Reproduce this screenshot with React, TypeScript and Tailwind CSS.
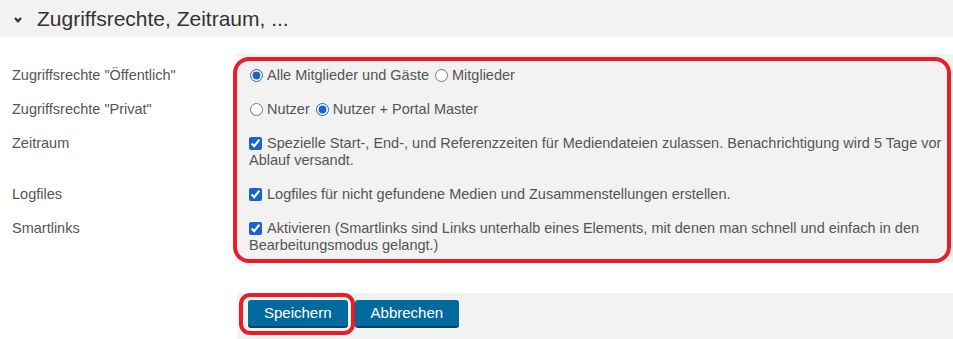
import React from 'react';

const font = "font-['Liberation_Sans',Arial,sans-serif]";

function Row({ label, children }: { label: string; children: React.ReactNode }) {
  return (
    <div className="flex">
      <div className="w-[237px] shrink-0 pl-3 py-[8.5px] leading-[17px]">{label}</div>
      <div className="flex-1 bg-[#f2f2f2] pl-3 pr-[6px] py-[8.5px] leading-[17px]">{children}</div>
    </div>
  );
}

const radio = 'm-0 h-[13px] w-[13px] align-[-2px] accent-[#1a62cc]';
const check = 'm-0 mr-[5px] h-[13px] w-[13px] align-[-2px] accent-[#1a62cc]';

export default function App() {
  return (
    <div className={`h-[339px] w-[953px] overflow-hidden bg-white text-[14.5px] text-[#555] ${font}`}>
      <div className="flex h-[37px] items-center bg-[#f2f2f2] pl-[14px]">
        <svg width="8" height="6" viewBox="0 0 8 6" className="mt-[2px]">
          <polyline points="1,1 4,4.3 7,1" fill="none" stroke="#333" strokeWidth="2.2" />
        </svg>
        <span className="ml-[15px] text-[21px] text-[#333]">Zugriffsrechte, Zeitraum, ...</span>
      </div>

      <div className="relative mt-[17px]">
        <div className="flex">
          <div className="w-[237px] shrink-0" />
          <div className="h-1 flex-1 bg-[#f2f2f2]" />
        </div>
        <Row label={'Zugriffsrechte "Öffentlich"'}>
          <label>
            <input type="radio" name="pub" defaultChecked className={`${radio} ml-px mr-[4px]`} />
            Alle Mitglieder und Gäste
          </label>{' '}
          <label>
            <input type="radio" name="pub" className={`${radio} ml-[2px] mr-[4px]`} />
            Mitglieder
          </label>
        </Row>
        <Row label={'Zugriffsrechte "Privat"'}>
          <label>
            <input type="radio" name="priv" className={`${radio} ml-px mr-[4px]`} />
            Nutzer
          </label>{' '}
          <label>
            <input type="radio" name="priv" defaultChecked className={`${radio} ml-[2px] mr-[4px]`} />
            Nutzer + Portal Master
          </label>
        </Row>
        <Row label="Zeitraum">
          <input type="checkbox" defaultChecked className={check} />
          Spezielle Start-, End-, und Referenzzeiten für Mediendateien zulassen. Benachrichtigung wird 5 Tage vor
          Ablauf versandt.
        </Row>
        <Row label="Logfiles">
          <input type="checkbox" defaultChecked className={check} />
          Logfiles für nicht gefundene Medien und Zusammenstellungen erstellen.
        </Row>
        <Row label="Smartlinks">
          <input type="checkbox" defaultChecked className={check} />
          Aktivieren (Smartlinks sind Links unterhalb eines Elements, mit denen man schnell und einfach in den
          Bearbeitungsmodus gelangt.)
        </Row>
        <div className="pointer-events-none absolute left-[233px] top-[3px] h-[206px] w-[718px] rounded-[16px] border-4 border-[#ec1c24]" />
      </div>

      <div className="relative ml-[237px] mt-[31px] flex h-[50px] gap-[7px] bg-[#f2f2f2] pl-[11px] pt-[7px]">
        <button className="h-[28px] rounded-[3px] border-b-2 border-[#00456b] bg-[#006a9e] px-4 text-[15px] leading-[26px] text-white">
          Speichern
        </button>
        <button className="h-[28px] rounded-[3px] border-b-2 border-[#00456b] bg-[#006a9e] px-4 text-[15px] leading-[26px] text-white">
          Abbrechen
        </button>
        <div className="pointer-events-none absolute left-[2px] top-0 h-[42px] w-[116px] rounded-[11px] border-4 border-[#ec1c24]" />
      </div>
    </div>
  );
}
